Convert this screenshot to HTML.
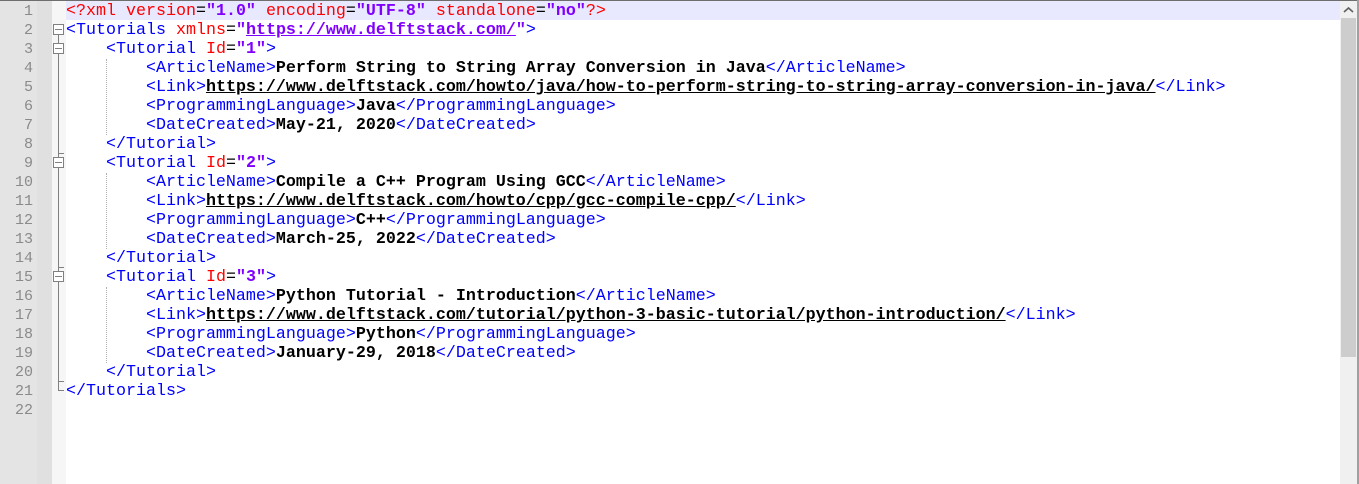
<!DOCTYPE html>
<html><head><meta charset="utf-8"><style>
body{margin:0;width:1359px;height:484px;overflow:hidden;background:#fff;position:relative;font-family:"Liberation Mono","Courier New",monospace;}
.top{position:absolute;left:0;top:0;width:1359px;height:1px;background:#6e6e6e}
.ln{position:absolute;left:0;top:1px;width:37px;height:483px;background:#e4e4e4}
.mk{position:absolute;left:37px;top:1px;width:15px;height:483px;background:#e0e0e0}
.fm{position:absolute;left:52px;top:1px;width:14px;height:483px;background:#f6f6f6}
.hl{position:absolute;left:66px;top:1px;width:1274px;height:19px;background:#e8e8ff}
.row{position:absolute;left:66px;height:19px;line-height:19px;font-size:16.67px;white-space:pre;color:#000;margin-top:1px}
.num{position:absolute;left:0;width:33px;text-align:right;height:19px;line-height:19px;font-size:15px;color:#8a8a8a;font-family:"Liberation Mono",monospace;margin-top:1px}
.t{color:#0000ff}.a{color:#ff0000}.v{color:#8000ff;font-weight:bold}.x{font-weight:bold}.u{font-weight:bold;text-decoration:underline}
.vu{color:#8000ff;font-weight:bold;text-decoration:underline}
.sb{position:absolute;left:1340px;top:1px;width:17px;height:483px;background:#f0f0f0}
.th{position:absolute;left:1341px;top:18px;width:15px;height:339px;background:#cdcdcd}
.rb{position:absolute;left:1357px;top:0;width:2px;height:484px;background:#a0a0a0}
.box{position:absolute;left:53px;width:11px;height:11px;border:1px solid #808080;background:#fff;box-sizing:border-box}
.box:after{content:"";position:absolute;left:1px;top:4px;width:7px;height:1px;background:#808080}
.vl{position:absolute;left:58px;width:1px;background:#808080}
.hk{position:absolute;left:58px;width:6px;height:1px;background:#808080}
.g{position:absolute;width:0;border-left:1px dotted #b0b0b0}
</style></head><body>
<div class="top"></div><div class="ln"></div><div class="mk"></div><div class="fm"></div><div class="hl"></div>
<div class="sb"></div><div class="th"></div><div class="rb"></div>
<svg style="position:absolute;left:1343px;top:6px" width="11" height="8"><path d="M1 6 L5.5 2 L10 6" stroke="#606060" stroke-width="1.6" fill="none"/></svg>

<div class="vl" style="top:34px;height:357px"></div>
<div class="box" style="top:24px"></div>
<div class="box" style="top:43px"></div>
<div class="hk" style="top:153px"></div>
<div class="box" style="top:157px"></div>
<div class="hk" style="top:267px"></div>
<div class="box" style="top:271px"></div>
<div class="hk" style="top:381px"></div>
<div class="hk" style="top:390px"></div>

<div class="g" style="left:106px;top:59px;height:76px"></div>
<div class="g" style="left:106px;top:173px;height:76px"></div>
<div class="g" style="left:106px;top:287px;height:76px"></div>

<div class="num" style="top:1px">1</div><div class="num" style="top:20px">2</div><div class="num" style="top:39px">3</div><div class="num" style="top:58px">4</div><div class="num" style="top:77px">5</div><div class="num" style="top:96px">6</div><div class="num" style="top:115px">7</div><div class="num" style="top:134px">8</div><div class="num" style="top:153px">9</div><div class="num" style="top:172px">10</div><div class="num" style="top:191px">11</div><div class="num" style="top:210px">12</div><div class="num" style="top:229px">13</div><div class="num" style="top:248px">14</div><div class="num" style="top:267px">15</div><div class="num" style="top:286px">16</div><div class="num" style="top:305px">17</div><div class="num" style="top:324px">18</div><div class="num" style="top:343px">19</div><div class="num" style="top:362px">20</div><div class="num" style="top:381px">21</div><div class="num" style="top:400px">22</div>

<div class="row" style="top:1px"><span class="a">&lt;?xml version</span>=<span class="v">"1.0"</span> <span class="a">encoding</span>=<span class="v">"UTF-8"</span> <span class="a">standalone</span>=<span class="v">"no"</span><span class="a">?&gt;</span></div>
<div class="row" style="top:20px"><span class="t">&lt;Tutorials</span> <span class="a">xmlns</span>=<span class="v">"</span><span class="vu">https://www.delftstack.com/</span><span class="v">"</span><span class="t">&gt;</span></div>
<div class="row" style="top:39px">    <span class="t">&lt;Tutorial</span> <span class="a">Id</span>=<span class="v">"1"</span><span class="t">&gt;</span></div>
<div class="row" style="top:58px">        <span class="t">&lt;ArticleName&gt;</span><span class="x">Perform String to String Array Conversion in Java</span><span class="t">&lt;/ArticleName&gt;</span></div>
<div class="row" style="top:77px">        <span class="t">&lt;Link&gt;</span><span class="u">https://www.delftstack.com/howto/java/how-to-perform-string-to-string-array-conversion-in-java/</span><span class="t">&lt;/Link&gt;</span></div>
<div class="row" style="top:96px">        <span class="t">&lt;ProgrammingLanguage&gt;</span><span class="x">Java</span><span class="t">&lt;/ProgrammingLanguage&gt;</span></div>
<div class="row" style="top:115px">        <span class="t">&lt;DateCreated&gt;</span><span class="x">May-21, 2020</span><span class="t">&lt;/DateCreated&gt;</span></div>
<div class="row" style="top:134px">    <span class="t">&lt;/Tutorial&gt;</span></div>
<div class="row" style="top:153px">    <span class="t">&lt;Tutorial</span> <span class="a">Id</span>=<span class="v">"2"</span><span class="t">&gt;</span></div>
<div class="row" style="top:172px">        <span class="t">&lt;ArticleName&gt;</span><span class="x">Compile a C++ Program Using GCC</span><span class="t">&lt;/ArticleName&gt;</span></div>
<div class="row" style="top:191px">        <span class="t">&lt;Link&gt;</span><span class="u">https://www.delftstack.com/howto/cpp/gcc-compile-cpp/</span><span class="t">&lt;/Link&gt;</span></div>
<div class="row" style="top:210px">        <span class="t">&lt;ProgrammingLanguage&gt;</span><span class="x">C++</span><span class="t">&lt;/ProgrammingLanguage&gt;</span></div>
<div class="row" style="top:229px">        <span class="t">&lt;DateCreated&gt;</span><span class="x">March-25, 2022</span><span class="t">&lt;/DateCreated&gt;</span></div>
<div class="row" style="top:248px">    <span class="t">&lt;/Tutorial&gt;</span></div>
<div class="row" style="top:267px">    <span class="t">&lt;Tutorial</span> <span class="a">Id</span>=<span class="v">"3"</span><span class="t">&gt;</span></div>
<div class="row" style="top:286px">        <span class="t">&lt;ArticleName&gt;</span><span class="x">Python Tutorial - Introduction</span><span class="t">&lt;/ArticleName&gt;</span></div>
<div class="row" style="top:305px">        <span class="t">&lt;Link&gt;</span><span class="u">https://www.delftstack.com/tutorial/python-3-basic-tutorial/python-introduction/</span><span class="t">&lt;/Link&gt;</span></div>
<div class="row" style="top:324px">        <span class="t">&lt;ProgrammingLanguage&gt;</span><span class="x">Python</span><span class="t">&lt;/ProgrammingLanguage&gt;</span></div>
<div class="row" style="top:343px">        <span class="t">&lt;DateCreated&gt;</span><span class="x">January-29, 2018</span><span class="t">&lt;/DateCreated&gt;</span></div>
<div class="row" style="top:362px">    <span class="t">&lt;/Tutorial&gt;</span></div>
<div class="row" style="top:381px"><span class="t">&lt;/Tutorials&gt;</span></div>
</body></html>
